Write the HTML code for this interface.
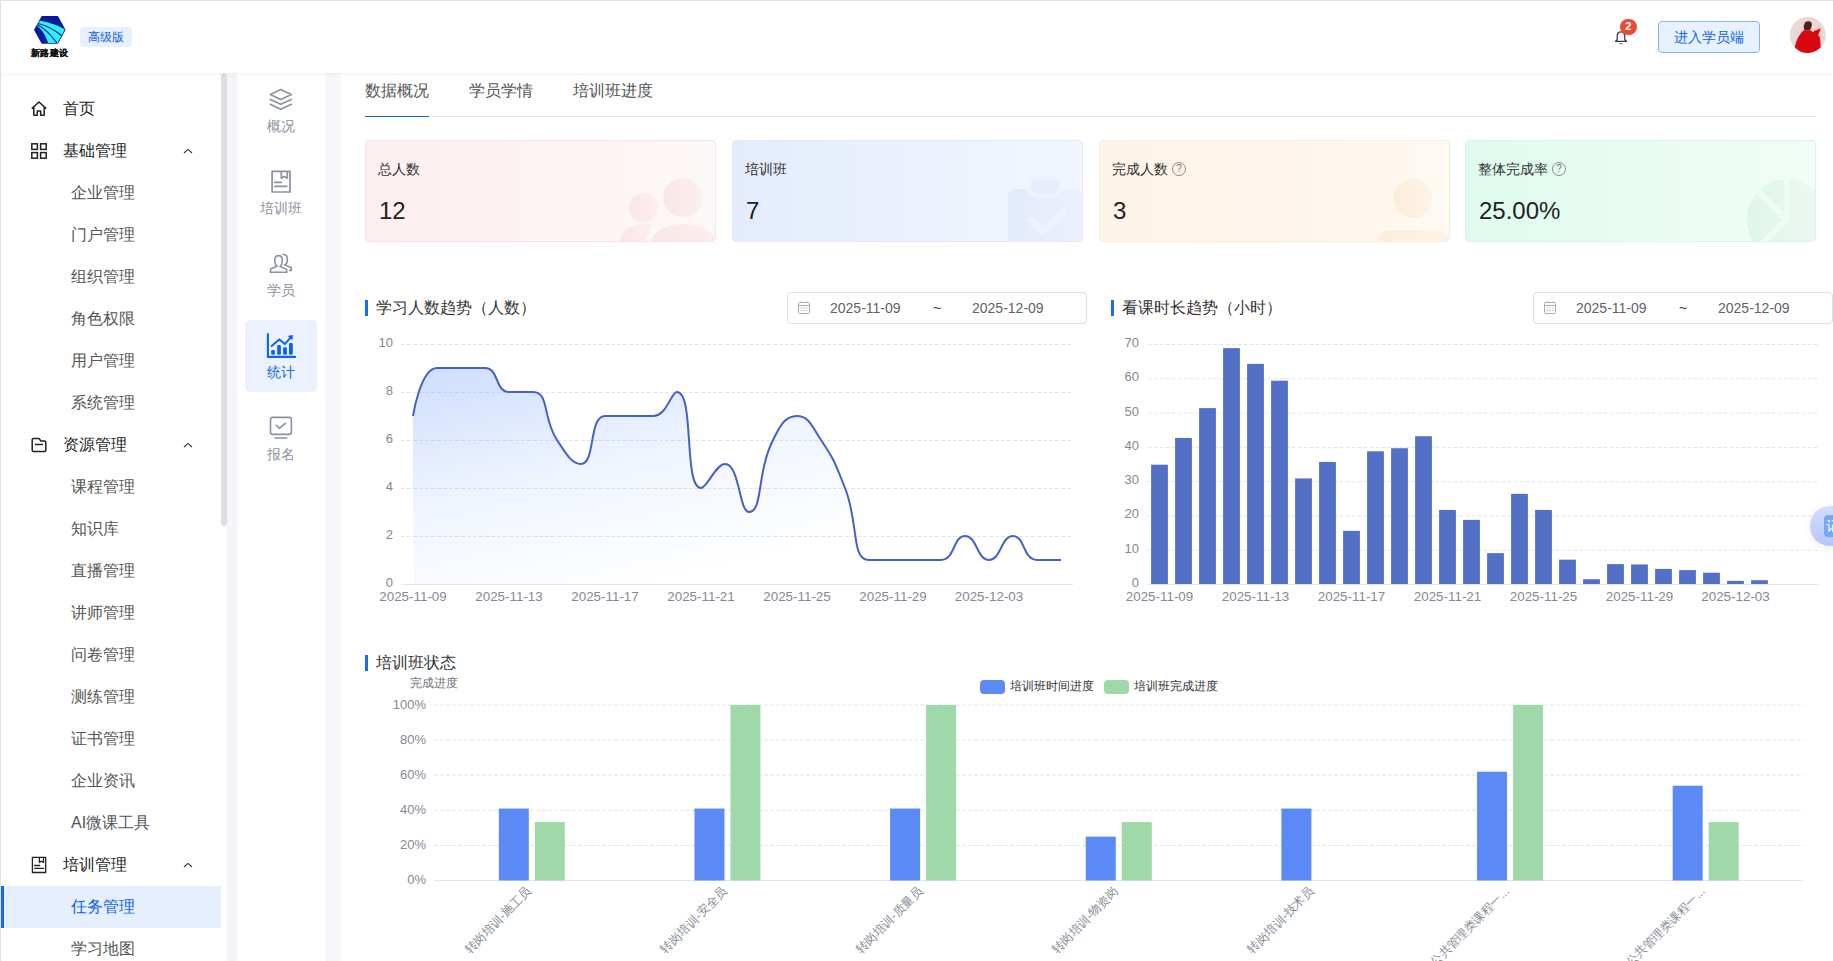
<!DOCTYPE html><html><head><meta charset="utf-8"><title>dashboard</title><style>
*{box-sizing:border-box;margin:0;padding:0}
html,body{width:1833px;height:961px;overflow:hidden;background:#fff;font-family:"Liberation Sans", sans-serif;}
.a{position:absolute;white-space:nowrap}
</style></head><body>
<div class="a" style="left:0;top:0;width:1833px;height:1px;background:#e1e1e1;z-index:50"></div>
<div class="a" style="left:0;top:0;width:1px;height:961px;background:#e1e1e1;z-index:50"></div>
<div class="a" style="left:221px;top:73px;width:6px;height:888px;background:#fff"></div>
<div class="a" style="left:325px;top:73px;width:16px;height:888px;background:#f5f7fb"></div>
<div class="a" style="left:221px;top:73px;width:6px;height:453px;background:#dddee1;border-radius:3px"></div>
<div class="a" style="left:227px;top:73px;width:10px;height:888px;background:#f4f6fa"></div>
<div class="a" style="left:0;top:0;width:1833px;height:73px;background:#fff;box-shadow:0 1px 6px rgba(0,0,0,0.06);z-index:10">
<svg class="a" style="left:30px;top:14px" width="40" height="34" viewBox="30 14 40 34">
<defs><clipPath id="hx"><polygon points="42.1,16.8 57.5,16.8 64.7,29.8 57.5,42.9 42.1,42.9 34.9,29.8" stroke="#000" stroke-width="1.6" stroke-linejoin="round"/></clipPath></defs>
<polygon points="42.1,16.8 57.5,16.8 64.7,29.8 57.5,42.9 42.1,42.9 34.9,29.8" fill="#071b9c" stroke="#071b9c" stroke-width="1.6" stroke-linejoin="round"/>
<g clip-path="url(#hx)">
<path d="M39,20.6 C50,22.5 58,25.5 67,30.5 L67,45 L48.7,45 C46.5,37 42.5,29.5 36,25 Z" fill="#30f2f6"/>
<path d="M37.5,23.3 C46,25.5 55,30 62.5,36.5" fill="none" stroke="#0a1a9c" stroke-width="1.1"/>
<path d="M36.8,24.3 C44,28 50,33.5 58.2,44.5" fill="none" stroke="#0a1a9c" stroke-width="1.1"/>
</g></svg>
<div class="a" style="left:31px;top:47.5px;font-size:9px;font-weight:bold;color:#111;letter-spacing:0.3px;line-height:10px;-webkit-text-stroke:0.15px #111">新路建设</div>
<div class="a" style="left:80px;top:27px;width:52px;height:20px;background:#e8f0fd;border-radius:4px;color:#0b60f0;font-size:12px;line-height:20px;text-align:center">高级版</div>
<svg class="a" style="left:1612px;top:28px" width="18" height="18" viewBox="0 0 18 18">
<path d="M5.2,11.8 L5.2,8.4 Q5.2,3.9 9,3.9 Q12.8,3.9 12.8,8.4 L12.8,11.8 L14.5,13.3 L3.5,13.3 Z" fill="none" stroke="#353a42" stroke-width="1.25" stroke-linejoin="round"/><path d="M7.3,15.6 L10.7,15.6" stroke="#7d828a" stroke-width="1.1"/></svg>
<div class="a" style="left:1619.5px;top:19px;width:17.5px;height:15.5px;border-radius:8px;background:#e94b38;color:#fff;font-size:11px;font-weight:bold;line-height:15.5px;text-align:center">2</div>
<div class="a" style="left:1658px;top:21px;width:102px;height:32px;background:#e8f2fe;border:1px solid #84b2f8;border-radius:4px;color:#0b60f0;font-size:14px;line-height:30px;text-align:center">进入学员端</div>
<svg class="a" style="left:1789px;top:17px" width="37" height="37" viewBox="0 0 37 37">
<defs><clipPath id="av"><circle cx="18.8" cy="18" r="18"/></clipPath></defs>
<circle cx="18.8" cy="18" r="18" fill="#ecd9d5"/>
<g clip-path="url(#av)">
<path d="M15,12.8 Q14.3,8 16,5.5 Q19,3.2 22,5 Q23.8,7 22.5,10 Q21.5,12.5 20.5,13.5 Z" fill="#4b2217"/>
<path d="M14.7,13.3 L21.5,13.3 Q25,15 26.5,18.5 L30.5,19 Q32,26 31.5,31 Q27,35 19,36.5 L11,36 Q6,33.5 6,29.7 Q8,19 14.7,13.3 Z" fill="#d9070f"/>
<path d="M24,16 Q25,13 28,13 Q30,12 31.5,11 Q31.5,14 30,15.5 Q30,19 27,20 Q24.5,19 24,16 Z" fill="#d9070f"/>
</g></svg>
</div>
<div class="a" style="left:1px;top:73px;width:220px;height:888px;background:#fff"></div>
<svg class="a" style="left:30px;top:100px" width="18" height="18" viewBox="0 0 18 18"><path d="M1.8,8.6 L9,2 L16.2,8.6 M3.8,7 L3.8,15.3 L7.3,15.3 L7.3,11 L10.7,11 L10.7,15.3 L14.2,15.3 L14.2,7" fill="none" stroke="#222" stroke-width="1.5" stroke-linejoin="round"/></svg>
<div class="a" style="left:63px;top:98.0px;font-size:16px;line-height:22px;color:#222">首页</div>
<svg class="a" style="left:30px;top:142px" width="18" height="18" viewBox="0 0 18 18"><g fill="none" stroke="#222" stroke-width="1.5"><rect x="1.8" y="1.8" width="5.6" height="5.6"/><rect x="10.6" y="1.8" width="5.6" height="5.6"/><rect x="1.8" y="10.6" width="5.6" height="5.6"/><rect x="10.6" y="10.6" width="5.6" height="5.6"/></g></svg>
<div class="a" style="left:63px;top:140.0px;font-size:16px;line-height:22px;color:#222">基础管理</div>
<svg class="a" style="left:182px;top:147px" width="12" height="8" viewBox="0 0 12 8"><path d="M2,6 L6,2.4 L10,6" fill="none" stroke="#333" stroke-width="1.1"/></svg>
<div class="a" style="left:71px;top:182.0px;font-size:16px;line-height:22px;color:#555">企业管理</div>
<div class="a" style="left:71px;top:224.0px;font-size:16px;line-height:22px;color:#555">门户管理</div>
<div class="a" style="left:71px;top:266.0px;font-size:16px;line-height:22px;color:#555">组织管理</div>
<div class="a" style="left:71px;top:308.0px;font-size:16px;line-height:22px;color:#555">角色权限</div>
<div class="a" style="left:71px;top:350.0px;font-size:16px;line-height:22px;color:#555">用户管理</div>
<div class="a" style="left:71px;top:392.0px;font-size:16px;line-height:22px;color:#555">系统管理</div>
<svg class="a" style="left:30px;top:436px" width="18" height="18" viewBox="0 0 18 18"><path d="M2.2,3.8 Q2.2,2.6 3.4,2.6 L8.6,2.6 Q9.4,2.6 9.8,3.3 L10.8,5.0 L14.6,5.0 Q15.8,5.0 15.8,6.2 L15.8,14.2 Q15.8,15.4 14.6,15.4 L3.4,15.4 Q2.2,15.4 2.2,14.2 Z M5,8.5 L13,8.5" fill="none" stroke="#222" stroke-width="1.5" stroke-linejoin="round"/></svg>
<div class="a" style="left:63px;top:434.0px;font-size:16px;line-height:22px;color:#222">资源管理</div>
<svg class="a" style="left:182px;top:441px" width="12" height="8" viewBox="0 0 12 8"><path d="M2,6 L6,2.4 L10,6" fill="none" stroke="#333" stroke-width="1.1"/></svg>
<div class="a" style="left:71px;top:476.0px;font-size:16px;line-height:22px;color:#555">课程管理</div>
<div class="a" style="left:71px;top:518.0px;font-size:16px;line-height:22px;color:#555">知识库</div>
<div class="a" style="left:71px;top:560.0px;font-size:16px;line-height:22px;color:#555">直播管理</div>
<div class="a" style="left:71px;top:602.0px;font-size:16px;line-height:22px;color:#555">讲师管理</div>
<div class="a" style="left:71px;top:644.0px;font-size:16px;line-height:22px;color:#555">问卷管理</div>
<div class="a" style="left:71px;top:686.0px;font-size:16px;line-height:22px;color:#555">测练管理</div>
<div class="a" style="left:71px;top:728.0px;font-size:16px;line-height:22px;color:#555">证书管理</div>
<div class="a" style="left:71px;top:770.0px;font-size:16px;line-height:22px;color:#555">企业资讯</div>
<div class="a" style="left:71px;top:812.0px;font-size:16px;line-height:22px;color:#555">AI微课工具</div>
<svg class="a" style="left:30px;top:856px" width="18" height="18" viewBox="0 0 18 18"><path d="M2.4,1.3 L15.7,1.3 L15.7,16.5 L2.4,16.5 Z M9.4,1.3 L9.4,6.5 L11.4,5.2 L13.5,6.5 L13.5,1.3 M4.6,9.5 L9.7,9.5 M4.6,12.4 L13.5,12.4" fill="none" stroke="#222" stroke-width="1.3" stroke-linejoin="round" stroke-linecap="round"/></svg>
<div class="a" style="left:63px;top:854.0px;font-size:16px;line-height:22px;color:#222">培训管理</div>
<svg class="a" style="left:182px;top:861px" width="12" height="8" viewBox="0 0 12 8"><path d="M2,6 L6,2.4 L10,6" fill="none" stroke="#333" stroke-width="1.1"/></svg>
<div class="a" style="left:1px;top:886.0px;width:220px;height:42px;background:#e6effd"></div>
<div class="a" style="left:1px;top:886.0px;width:3px;height:42px;background:#1565f0"></div>
<div class="a" style="left:71px;top:896.0px;font-size:16px;line-height:22px;color:#0d62ef">任务管理</div>
<div class="a" style="left:71px;top:938.0px;font-size:16px;line-height:22px;color:#555">学习地图</div>
<div class="a" style="left:237px;top:73px;width:88px;height:888px;background:#fff"></div>
<div class="a" style="left:245px;top:320px;width:72px;height:72px;background:#ebf2fe;border-radius:5px"></div>
<svg class="a" style="left:262px;top:82px" width="38" height="34" viewBox="0 0 38 34"><path d="M18.75,7.6 L29.4,12.6 L18.75,17.4 L8.3,12.6 Z M8.3,17.5 L18.75,22.3 L29.4,17.5 M8.3,22.3 L18.75,27.2 L29.4,22.3" fill="none" stroke="#8a92a0" stroke-width="1.7" stroke-linejoin="round" stroke-linecap="round"/></svg>
<div class="a" style="left:237px;top:117px;width:88px;text-align:center;font-size:14px;line-height:18px;color:#8a92a0">概况</div>
<svg class="a" style="left:262px;top:164px" width="38" height="34" viewBox="0 0 38 34"><path d="M10.1,7.4 L28,7.4 L28,28 L10.1,28 Z M19.3,7.4 L19.3,14.2 L22.3,12.5 L25.3,14.2 L25.3,7.4 M12.7,18.4 L19.3,18.4 M12.7,22.3 L24.8,22.3" fill="none" stroke="#8a92a0" stroke-width="1.7" stroke-linejoin="round" stroke-linecap="round"/></svg>
<div class="a" style="left:237px;top:199px;width:88px;text-align:center;font-size:14px;line-height:18px;color:#8a92a0">培训班</div>
<svg class="a" style="left:262px;top:246px" width="38" height="34" viewBox="0 0 38 34"><path d="M14.9,20.2 Q12.9,18.5 12.9,16 L12.9,13.5 Q12.9,9.6 16.6,9.6 Q20.2,9.6 20.2,13.5 L20.2,16 Q20.2,18.5 18.2,20.4 L24.6,23.4 L24.6,26.2 L8.5,26.2 L8.5,23 Z M20.3,8.2 Q25.3,8.2 25.3,12.5 L25.3,15.2 Q25.3,17.5 22.8,19 L29.4,21.8 L29.4,24.4 L26.9,24.4" fill="none" stroke="#8a92a0" stroke-width="1.6" stroke-linejoin="miter"/></svg>
<div class="a" style="left:237px;top:281px;width:88px;text-align:center;font-size:14px;line-height:18px;color:#8a92a0">学员</div>
<svg class="a" style="left:262px;top:328px" width="38" height="34" viewBox="0 0 38 34"><path d="M5.9,6 L5.9,28.9 L33.2,28.9" fill="none" stroke="#0b62f6" stroke-width="2.1" stroke-linecap="round" stroke-linejoin="round"/><path d="M9.6,18 L17.3,11.4 L22.8,16.1 L29,9.2" fill="none" stroke="#0b62f6" stroke-width="2" stroke-linecap="round" stroke-linejoin="round"/><path d="M26.3,8.1 L30.7,7.4 L30,11.8 Z" fill="#0b62f6" stroke="#0b62f6" stroke-width="0.6" stroke-linejoin="round"/><rect x="9.2" y="22.1" width="3.7" height="4.7" rx="1.2" fill="#0b62f6"/><rect x="15.2" y="17" width="3.7" height="9.8" rx="1.2" fill="#0b62f6"/><rect x="21.1" y="19.3" width="3.8" height="7.5" rx="1.2" fill="#0b62f6"/><rect x="27" y="14.9" width="3.8" height="11.9" rx="1.2" fill="#0b62f6"/></svg>
<div class="a" style="left:237px;top:363px;width:88px;text-align:center;font-size:14px;line-height:18px;color:#0b62f6">统计</div>
<svg class="a" style="left:262px;top:410px" width="38" height="34" viewBox="0 0 38 34"><rect x="8.5" y="7.4" width="20.9" height="17" rx="2.2" fill="none" stroke="#8a92a0" stroke-width="1.6"/><path d="M14.2,15.2 L17.3,18.3 L23.4,13.4 M13.1,28 L24.8,28" fill="none" stroke="#8a92a0" stroke-width="1.6" stroke-linecap="round" stroke-linejoin="round"/></svg>
<div class="a" style="left:237px;top:445px;width:88px;text-align:center;font-size:14px;line-height:18px;color:#8a92a0">报名</div>
<div class="a" style="left:341px;top:73px;width:1492px;height:888px;background:#fff"></div>
<div class="a" style="left:365px;top:80px;font-size:16px;line-height:22px;color:#555">数据概况</div>
<div class="a" style="left:469px;top:80px;font-size:16px;line-height:22px;color:#555">学员学情</div>
<div class="a" style="left:573px;top:80px;font-size:16px;line-height:22px;color:#555">培训班进度</div>
<div class="a" style="left:365px;top:116px;width:1451px;height:1px;background:#e4e7ed"></div>
<div class="a" style="left:365px;top:116px;width:64px;height:1px;background:#0b62ef"></div>
<div class="a" style="left:365px;top:140px;width:351px;height:102px;background:linear-gradient(90deg,#fcefef,#fdf8f8);border:1px solid #f9e3e3;border-radius:4px;overflow:hidden">
<div class="a" style="left:12px;top:19px;font-size:14px;line-height:18px;color:#333;z-index:2">总人数</div>
<div class="a" style="left:13px;top:56px;font-size:24px;line-height:28px;color:#222">12</div>
<svg class="a" style="left:0;top:0" width="351" height="102" viewBox="0 0 351 102"><defs><linearGradient id="ci1" x1="0" y1="0" x2="1" y2="0"><stop offset="0" stop-color="#fae6e6"/><stop offset="1" stop-color="#fcefef"/></linearGradient></defs>
<g fill="url(#ci1)"><circle cx="277.5" cy="66.5" r="14.6"/><path d="M253.5,102 Q255,88 270,84.5 Q277,82.5 286.5,82.5 L279,102 Z"/>
<circle cx="316.8" cy="56.8" r="19.5"/><path d="M281,104 Q288,81 316.8,81 Q346,81 355,104 Z" stroke="#fdf7f7" stroke-width="4"/></g></svg>
</div>
<div class="a" style="left:732px;top:140px;width:351px;height:102px;background:linear-gradient(90deg,#e4ecfc,#f2f6fe);border:1px solid #e0e8fb;border-radius:4px;overflow:hidden">
<div class="a" style="left:12px;top:19px;font-size:14px;line-height:18px;color:#333;z-index:2">培训班</div>
<div class="a" style="left:13px;top:56px;font-size:24px;line-height:28px;color:#222">7</div>
<svg class="a" style="left:0;top:0" width="351" height="102" viewBox="0 0 351 102"><defs><linearGradient id="ci2" x1="0" y1="0" x2="1" y2="0"><stop offset="0" stop-color="#e2eafb"/><stop offset="1" stop-color="#ecf1fd"/></linearGradient></defs>
<path d="M275,104 L275,56 Q275,48 283,48 L341,48 Q349,48 349,56 L349,104 Z" fill="url(#ci2)"/>
<rect x="296" y="36.7" width="32" height="17.8" rx="8.5" fill="#e6edfc" stroke="#eef3fd" stroke-width="4"/>
<path d="M298,79 L309.6,90.8 L330,70.8" fill="none" stroke="#eef3fd" stroke-width="7" stroke-linecap="round" stroke-linejoin="round"/></svg>
</div>
<div class="a" style="left:1099px;top:140px;width:351px;height:102px;background:linear-gradient(90deg,#fef3e7,#fef9f3);border:1px solid #fdecd9;border-radius:4px;overflow:hidden">
<div class="a" style="left:12px;top:19px;font-size:14px;line-height:18px;color:#333;z-index:2">完成人数<span style="display:inline-block;width:14px;height:14px;border:1px solid #8a8a8a;border-radius:50%;font-size:10px;line-height:12px;text-align:center;color:#777;margin-left:4px;vertical-align:2px">?</span></div>
<div class="a" style="left:13px;top:56px;font-size:24px;line-height:28px;color:#222">3</div>
<svg class="a" style="left:0;top:0" width="351" height="102" viewBox="0 0 351 102"><defs><linearGradient id="ci3" x1="0" y1="0" x2="1" y2="0"><stop offset="0" stop-color="#fdedda"/><stop offset="1" stop-color="#fdf3e8"/></linearGradient></defs>
<g fill="url(#ci3)"><circle cx="313" cy="57.6" r="19.6"/><path d="M276.5,102 Q278,89 294,89 L332,89 Q348,89 349.5,102 Z"/></g></svg>
</div>
<div class="a" style="left:1465px;top:140px;width:351px;height:102px;background:linear-gradient(90deg,#e0fbee,#f1fdf6);border:1px solid #daf5e7;border-radius:4px;overflow:hidden">
<div class="a" style="left:12px;top:19px;font-size:14px;line-height:18px;color:#333;z-index:2">整体完成率<span style="display:inline-block;width:14px;height:14px;border:1px solid #8a8a8a;border-radius:50%;font-size:10px;line-height:12px;text-align:center;color:#777;margin-left:4px;vertical-align:2px">?</span></div>
<div class="a" style="left:13px;top:56px;font-size:24px;line-height:28px;color:#222">25.00%</div>
<svg class="a" style="left:0;top:0" width="351" height="102" viewBox="0 0 351 102"><defs><linearGradient id="ci4" x1="0" y1="0" x2="1" y2="0"><stop offset="0" stop-color="#dff6e9"/><stop offset="1" stop-color="#eef8f2"/></linearGradient></defs>
<circle cx="321" cy="78.3" r="40.2" fill="url(#ci4)"/>
<path d="M321,38 L321,79 M287,45 L321,79 M322,77 L294,105" fill="none" stroke="#effcf5" stroke-width="5.6"/></svg>
</div>
<div class="a" style="left:365px;top:300px;width:3px;height:16px;background:#1a6cf0"></div>
<div class="a" style="left:376px;top:297px;font-size:16px;line-height:22px;color:#333">学习人数趋势（人数）</div>
<div class="a" style="left:787px;top:292px;width:300px;height:32px;border:1px solid #dcdfe6;border-radius:4px;background:#fff">
<svg class="a" style="left:10px;top:8px" width="13" height="13" viewBox="0 0 13 13"><g fill="none" stroke="#a8abb2" stroke-width="1"><rect x="0.5" y="1.5" width="11" height="11" rx="1"/><path d="M0.5,4.5 L11.5,4.5 M3,0.5 L3,2 M9,0.5 L9,2"/></g><g fill="#a8abb2"><rect x="2.5" y="6.5" width="1.2" height="1"/><rect x="5.4" y="6.5" width="1.2" height="1"/><rect x="8.3" y="6.5" width="1.2" height="1"/><rect x="2.5" y="9" width="1.2" height="1"/><rect x="5.4" y="9" width="1.2" height="1"/><rect x="8.3" y="9" width="1.2" height="1"/></g></svg>
<div class="a" style="left:42px;top:7px;font-size:14px;line-height:16px;color:#606266">2025-11-09</div>
<div class="a" style="left:145px;top:7px;font-size:14px;line-height:16px;color:#303133">~</div>
<div class="a" style="left:184px;top:7px;font-size:14px;line-height:16px;color:#606266">2025-12-09</div>
</div>
<div class="a" style="left:1111px;top:300px;width:3px;height:16px;background:#1a6cf0"></div>
<div class="a" style="left:1122px;top:297px;font-size:16px;line-height:22px;color:#333">看课时长趋势（小时）</div>
<div class="a" style="left:1533px;top:292px;width:300px;height:32px;border:1px solid #dcdfe6;border-radius:4px;background:#fff">
<svg class="a" style="left:10px;top:8px" width="13" height="13" viewBox="0 0 13 13"><g fill="none" stroke="#a8abb2" stroke-width="1"><rect x="0.5" y="1.5" width="11" height="11" rx="1"/><path d="M0.5,4.5 L11.5,4.5 M3,0.5 L3,2 M9,0.5 L9,2"/></g><g fill="#a8abb2"><rect x="2.5" y="6.5" width="1.2" height="1"/><rect x="5.4" y="6.5" width="1.2" height="1"/><rect x="8.3" y="6.5" width="1.2" height="1"/><rect x="2.5" y="9" width="1.2" height="1"/><rect x="5.4" y="9" width="1.2" height="1"/><rect x="8.3" y="9" width="1.2" height="1"/></g></svg>
<div class="a" style="left:42px;top:7px;font-size:14px;line-height:16px;color:#606266">2025-11-09</div>
<div class="a" style="left:145px;top:7px;font-size:14px;line-height:16px;color:#303133">~</div>
<div class="a" style="left:184px;top:7px;font-size:14px;line-height:16px;color:#606266">2025-12-09</div>
</div>
<div class="a" style="left:365px;top:655px;width:3px;height:16px;background:#1a6cf0"></div>
<div class="a" style="left:376px;top:652px;font-size:16px;line-height:22px;color:#333">培训班状态</div>
<svg class="a" style="left:0;top:0;font-family:'Liberation Sans',sans-serif" width="1833" height="961" viewBox="0 0 1833 961"><line x1="401" y1="584.5" x2="1073" y2="584.5" stroke="#e0e6f1" stroke-width="1"/><text x="393" y="587" text-anchor="end" font-size="13" fill="#848894">0</text><line x1="401" y1="536.5" x2="1073" y2="536.5" stroke="#e0e6f1" stroke-width="1" stroke-dasharray="4,2"/><text x="393" y="539" text-anchor="end" font-size="13" fill="#848894">2</text><line x1="401" y1="488.5" x2="1073" y2="488.5" stroke="#e0e6f1" stroke-width="1" stroke-dasharray="4,2"/><text x="393" y="491" text-anchor="end" font-size="13" fill="#848894">4</text><line x1="401" y1="440.5" x2="1073" y2="440.5" stroke="#e0e6f1" stroke-width="1" stroke-dasharray="4,2"/><text x="393" y="443" text-anchor="end" font-size="13" fill="#848894">6</text><line x1="401" y1="392.5" x2="1073" y2="392.5" stroke="#e0e6f1" stroke-width="1" stroke-dasharray="4,2"/><text x="393" y="395" text-anchor="end" font-size="13" fill="#848894">8</text><line x1="401" y1="344.5" x2="1073" y2="344.5" stroke="#e0e6f1" stroke-width="1" stroke-dasharray="4,2"/><text x="393" y="347" text-anchor="end" font-size="13" fill="#848894">10</text><defs><linearGradient id="ag" x1="0" y1="0" x2="0.7" y2="1"><stop offset="0" stop-color="#5b8ff9" stop-opacity="0.3"/><stop offset="0.45" stop-color="#5b8ff9" stop-opacity="0.09"/><stop offset="0.85" stop-color="#5b8ff9" stop-opacity="0.0"/></linearGradient></defs><path d="M413.00,416.00 C413.00,416.00 420.42,368.00 437.00,368.00 C444.42,368.00 449.00,368.00 461.00,368.00 C473.00,368.00 475.06,368.00 485.00,368.00 C499.06,368.00 494.94,392.00 509.00,392.00 C518.94,392.00 525.58,392.00 533.00,392.00 C549.58,392.00 542.30,417.95 557.00,440.00 C566.30,453.95 571.70,464.00 581.00,464.00 C595.70,464.00 588.42,416.00 605.00,416.00 C612.42,416.00 617.00,416.00 629.00,416.00 C641.00,416.00 643.06,416.00 653.00,416.00 C667.06,416.00 670.87,392.00 677.00,392.00 C694.87,392.00 683.13,488.00 701.00,488.00 C707.13,488.00 715.70,464.00 725.00,464.00 C739.70,464.00 739.06,512.00 749.00,512.00 C763.06,512.00 756.42,473.17 773.00,440.00 C780.42,425.17 785.00,416.00 797.00,416.00 C809.00,416.00 811.70,426.05 821.00,440.00 C835.70,462.05 835.06,463.15 845.00,488.00 C859.06,523.15 850.77,560.00 869.00,560.00 C874.77,560.00 881.00,560.00 893.00,560.00 C905.00,560.00 905.00,560.00 917.00,560.00 C929.00,560.00 931.06,560.00 941.00,560.00 C955.06,560.00 953.00,536.00 965.00,536.00 C977.00,536.00 977.00,560.00 989.00,560.00 C1001.00,560.00 1001.00,536.00 1013.00,536.00 C1025.00,536.00 1022.94,560.00 1037.00,560.00 C1046.94,560.00 1061.00,560.00 1061.00,560.00 L1061,584 L413,584 Z" fill="url(#ag)"/><path d="M413.00,416.00 C413.00,416.00 420.42,368.00 437.00,368.00 C444.42,368.00 449.00,368.00 461.00,368.00 C473.00,368.00 475.06,368.00 485.00,368.00 C499.06,368.00 494.94,392.00 509.00,392.00 C518.94,392.00 525.58,392.00 533.00,392.00 C549.58,392.00 542.30,417.95 557.00,440.00 C566.30,453.95 571.70,464.00 581.00,464.00 C595.70,464.00 588.42,416.00 605.00,416.00 C612.42,416.00 617.00,416.00 629.00,416.00 C641.00,416.00 643.06,416.00 653.00,416.00 C667.06,416.00 670.87,392.00 677.00,392.00 C694.87,392.00 683.13,488.00 701.00,488.00 C707.13,488.00 715.70,464.00 725.00,464.00 C739.70,464.00 739.06,512.00 749.00,512.00 C763.06,512.00 756.42,473.17 773.00,440.00 C780.42,425.17 785.00,416.00 797.00,416.00 C809.00,416.00 811.70,426.05 821.00,440.00 C835.70,462.05 835.06,463.15 845.00,488.00 C859.06,523.15 850.77,560.00 869.00,560.00 C874.77,560.00 881.00,560.00 893.00,560.00 C905.00,560.00 905.00,560.00 917.00,560.00 C929.00,560.00 931.06,560.00 941.00,560.00 C955.06,560.00 953.00,536.00 965.00,536.00 C977.00,536.00 977.00,560.00 989.00,560.00 C1001.00,560.00 1001.00,536.00 1013.00,536.00 C1025.00,536.00 1022.94,560.00 1037.00,560.00 C1046.94,560.00 1061.00,560.00 1061.00,560.00" fill="none" stroke="#4462c4" stroke-width="2" stroke-linejoin="round"/><text x="413" y="601" text-anchor="middle" font-size="13.4" fill="#848894">2025-11-09</text><text x="509" y="601" text-anchor="middle" font-size="13.4" fill="#848894">2025-11-13</text><text x="605" y="601" text-anchor="middle" font-size="13.4" fill="#848894">2025-11-17</text><text x="701" y="601" text-anchor="middle" font-size="13.4" fill="#848894">2025-11-21</text><text x="797" y="601" text-anchor="middle" font-size="13.4" fill="#848894">2025-11-25</text><text x="893" y="601" text-anchor="middle" font-size="13.4" fill="#848894">2025-11-29</text><text x="989" y="601" text-anchor="middle" font-size="13.4" fill="#848894">2025-12-03</text><line x1="1147.5" y1="584.5" x2="1819.5" y2="584.5" stroke="#e0e6f1" stroke-width="1"/><text x="1139" y="587.0" text-anchor="end" font-size="13" fill="#848894">0</text><line x1="1147.5" y1="550.2" x2="1819.5" y2="550.2" stroke="#e0e6f1" stroke-width="1" stroke-dasharray="4,2"/><text x="1139" y="552.7" text-anchor="end" font-size="13" fill="#848894">10</text><line x1="1147.5" y1="515.9" x2="1819.5" y2="515.9" stroke="#e0e6f1" stroke-width="1" stroke-dasharray="4,2"/><text x="1139" y="518.4" text-anchor="end" font-size="13" fill="#848894">20</text><line x1="1147.5" y1="481.6" x2="1819.5" y2="481.6" stroke="#e0e6f1" stroke-width="1" stroke-dasharray="4,2"/><text x="1139" y="484.1" text-anchor="end" font-size="13" fill="#848894">30</text><line x1="1147.5" y1="447.4" x2="1819.5" y2="447.4" stroke="#e0e6f1" stroke-width="1" stroke-dasharray="4,2"/><text x="1139" y="449.9" text-anchor="end" font-size="13" fill="#848894">40</text><line x1="1147.5" y1="413.1" x2="1819.5" y2="413.1" stroke="#e0e6f1" stroke-width="1" stroke-dasharray="4,2"/><text x="1139" y="415.6" text-anchor="end" font-size="13" fill="#848894">50</text><line x1="1147.5" y1="378.8" x2="1819.5" y2="378.8" stroke="#e0e6f1" stroke-width="1" stroke-dasharray="4,2"/><text x="1139" y="381.3" text-anchor="end" font-size="13" fill="#848894">60</text><line x1="1147.5" y1="344.5" x2="1819.5" y2="344.5" stroke="#e0e6f1" stroke-width="1" stroke-dasharray="4,2"/><text x="1139" y="347.0" text-anchor="end" font-size="13" fill="#848894">70</text><rect x="1151.10" y="464.69" width="16.8" height="119.31" fill="#5470c6"/><rect x="1175.10" y="437.94" width="16.8" height="146.06" fill="#5470c6"/><rect x="1199.10" y="408.11" width="16.8" height="175.89" fill="#5470c6"/><rect x="1223.10" y="348.11" width="16.8" height="235.89" fill="#5470c6"/><rect x="1247.10" y="363.89" width="16.8" height="220.11" fill="#5470c6"/><rect x="1271.10" y="380.69" width="16.8" height="203.31" fill="#5470c6"/><rect x="1295.10" y="478.40" width="16.8" height="105.60" fill="#5470c6"/><rect x="1319.10" y="461.94" width="16.8" height="122.06" fill="#5470c6"/><rect x="1343.10" y="530.86" width="16.8" height="53.14" fill="#5470c6"/><rect x="1367.10" y="451.31" width="16.8" height="132.69" fill="#5470c6"/><rect x="1391.10" y="448.23" width="16.8" height="135.77" fill="#5470c6"/><rect x="1415.10" y="436.23" width="16.8" height="147.77" fill="#5470c6"/><rect x="1439.10" y="509.94" width="16.8" height="74.06" fill="#5470c6"/><rect x="1463.10" y="519.89" width="16.8" height="64.11" fill="#5470c6"/><rect x="1487.10" y="553.14" width="16.8" height="30.86" fill="#5470c6"/><rect x="1511.10" y="493.83" width="16.8" height="90.17" fill="#5470c6"/><rect x="1535.10" y="509.94" width="16.8" height="74.06" fill="#5470c6"/><rect x="1559.10" y="559.66" width="16.8" height="24.34" fill="#5470c6"/><rect x="1583.10" y="579.20" width="16.8" height="4.80" fill="#5470c6"/><rect x="1607.10" y="564.11" width="16.8" height="19.89" fill="#5470c6"/><rect x="1631.10" y="564.46" width="16.8" height="19.54" fill="#5470c6"/><rect x="1655.10" y="568.91" width="16.8" height="15.09" fill="#5470c6"/><rect x="1679.10" y="570.11" width="16.8" height="13.89" fill="#5470c6"/><rect x="1703.10" y="572.69" width="16.8" height="11.31" fill="#5470c6"/><rect x="1727.10" y="580.91" width="16.8" height="3.09" fill="#5470c6"/><rect x="1751.10" y="580.23" width="16.8" height="3.77" fill="#5470c6"/><text x="1159.5" y="601" text-anchor="middle" font-size="13.4" fill="#848894">2025-11-09</text><text x="1255.5" y="601" text-anchor="middle" font-size="13.4" fill="#848894">2025-11-13</text><text x="1351.5" y="601" text-anchor="middle" font-size="13.4" fill="#848894">2025-11-17</text><text x="1447.5" y="601" text-anchor="middle" font-size="13.4" fill="#848894">2025-11-21</text><text x="1543.5" y="601" text-anchor="middle" font-size="13.4" fill="#848894">2025-11-25</text><text x="1639.5" y="601" text-anchor="middle" font-size="13.4" fill="#848894">2025-11-29</text><text x="1735.5" y="601" text-anchor="middle" font-size="13.4" fill="#848894">2025-12-03</text><text x="434" y="687" text-anchor="middle" font-size="12" fill="#6e7079">完成进度</text><line x1="434" y1="880.5" x2="1803.5" y2="880.5" stroke="#e0e6f1" stroke-width="1"/><text x="426" y="884.0" text-anchor="end" font-size="13" fill="#848894">0%</text><line x1="434" y1="845.4" x2="1803.5" y2="845.4" stroke="#e0e6f1" stroke-width="1" stroke-dasharray="4,2"/><text x="426" y="848.9" text-anchor="end" font-size="13" fill="#848894">20%</text><line x1="434" y1="810.3" x2="1803.5" y2="810.3" stroke="#e0e6f1" stroke-width="1" stroke-dasharray="4,2"/><text x="426" y="813.8" text-anchor="end" font-size="13" fill="#848894">40%</text><line x1="434" y1="775.2" x2="1803.5" y2="775.2" stroke="#e0e6f1" stroke-width="1" stroke-dasharray="4,2"/><text x="426" y="778.7" text-anchor="end" font-size="13" fill="#848894">60%</text><line x1="434" y1="740.1" x2="1803.5" y2="740.1" stroke="#e0e6f1" stroke-width="1" stroke-dasharray="4,2"/><text x="426" y="743.6" text-anchor="end" font-size="13" fill="#848894">80%</text><line x1="434" y1="705.0" x2="1803.5" y2="705.0" stroke="#e0e6f1" stroke-width="1" stroke-dasharray="4,2"/><text x="426" y="708.5" text-anchor="end" font-size="13" fill="#848894">100%</text><rect x="498.82" y="808.54" width="30" height="71.95" fill="#5b8af7"/><rect x="534.82" y="822.06" width="30" height="58.44" fill="#9fd9a9"/><text transform="translate(531.8,892) rotate(-45)" text-anchor="end" font-size="12" fill="#848894">转岗培训-施工员</text><rect x="694.46" y="808.54" width="30" height="71.95" fill="#5b8af7"/><rect x="730.46" y="705.00" width="30" height="175.50" fill="#9fd9a9"/><text transform="translate(727.5,892) rotate(-45)" text-anchor="end" font-size="12" fill="#848894">转岗培训-安全员</text><rect x="890.11" y="808.54" width="30" height="71.95" fill="#5b8af7"/><rect x="926.11" y="705.00" width="30" height="175.50" fill="#9fd9a9"/><text transform="translate(923.1,892) rotate(-45)" text-anchor="end" font-size="12" fill="#848894">转岗培训-质量员</text><rect x="1085.75" y="836.62" width="30" height="43.88" fill="#5b8af7"/><rect x="1121.75" y="822.06" width="30" height="58.44" fill="#9fd9a9"/><text transform="translate(1118.8,892) rotate(-45)" text-anchor="end" font-size="12" fill="#848894">转岗培训-物资岗</text><rect x="1281.39" y="808.54" width="30" height="71.95" fill="#5b8af7"/><text transform="translate(1314.4,892) rotate(-45)" text-anchor="end" font-size="12" fill="#848894">转岗培训-技术员</text><rect x="1477.04" y="771.69" width="30" height="108.81" fill="#5b8af7"/><rect x="1513.04" y="705.00" width="30" height="175.50" fill="#9fd9a9"/><text transform="translate(1510.0,892) rotate(-45)" text-anchor="end" font-size="12" fill="#848894">公共管理类课程一...</text><rect x="1672.68" y="785.73" width="30" height="94.77" fill="#5b8af7"/><rect x="1708.68" y="822.06" width="30" height="58.44" fill="#9fd9a9"/><text transform="translate(1705.7,892) rotate(-45)" text-anchor="end" font-size="12" fill="#848894">公共管理类课程一...</text><rect x="980" y="680" width="25" height="14" rx="4" fill="#5b8af7"/><text x="1010" y="690" font-size="12" fill="#333">培训班时间进度</text><rect x="1104" y="680" width="25" height="14" rx="4" fill="#9fd9a9"/><text x="1134" y="690" font-size="12" fill="#333">培训班完成进度</text></svg>
<div class="a" style="left:1810px;top:506px;width:44px;height:40px;border-radius:20px;background:linear-gradient(180deg,#d3ddfd,#b4c6fb);box-shadow:0 2px 10px rgba(0,0,0,0.07);overflow:hidden"><div class="a" style="left:14px;top:9px;width:24px;height:22px;border-radius:4px;background:#78a7f5;color:#fff;font-size:14px;line-height:22px;padding-left:2px">记</div></div>
</body></html>
